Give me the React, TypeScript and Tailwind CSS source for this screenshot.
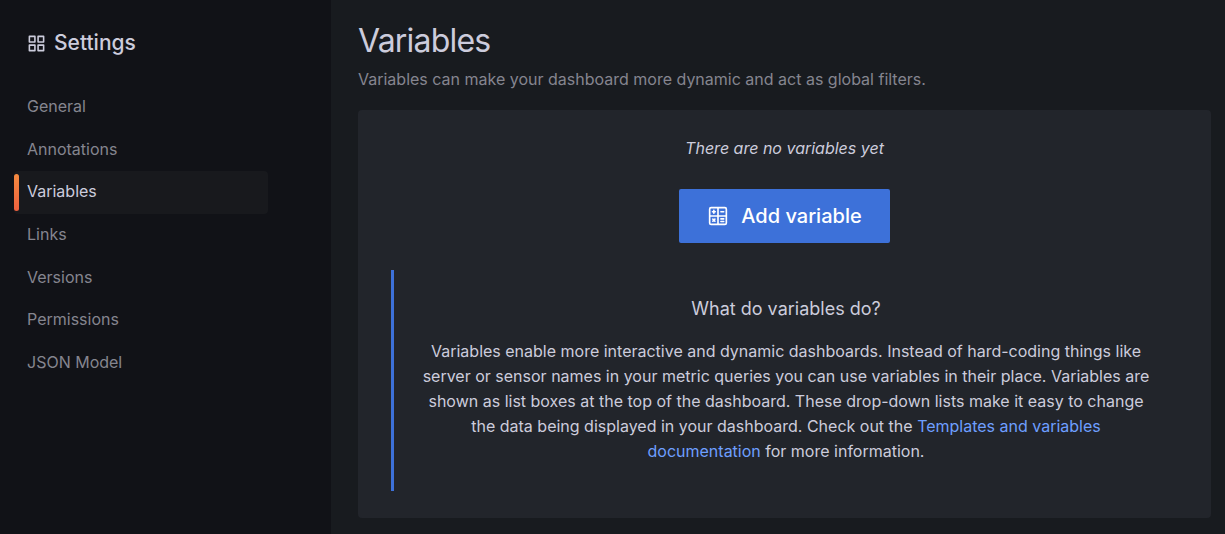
const sections = ['General', 'Annotations', 'Variables', 'Links', 'Versions', 'Permissions', 'JSON Model'];
const activeSection = 'Variables';

function AppsIcon() {
  return (
    <svg viewBox="0 0 24 24" className="size-[19px] shrink-0" fill="currentColor" aria-hidden="true">
      <path d="M10,13H3a1,1,0,0,0-1,1v7a1,1,0,0,0,1,1h7a1,1,0,0,0,1-1V14A1,1,0,0,0,10,13ZM9,20H4V15H9ZM21,2H14a1,1,0,0,0-1,1v7a1,1,0,0,0,1,1h7a1,1,0,0,0,1-1V3A1,1,0,0,0,21,2ZM20,9H15V4h5Zm1,4H14a1,1,0,0,0-1,1v7a1,1,0,0,0,1,1h7a1,1,0,0,0,1-1V14A1,1,0,0,0,21,13Zm-1,7H15V15h5ZM10,2H3A1,1,0,0,0,2,3v7a1,1,0,0,0,1,1h7a1,1,0,0,0,1-1V3A1,1,0,0,0,10,2ZM9,9H4V4H9Z" />
    </svg>
  );
}

function CalculatorIcon() {
  return (
    <svg viewBox="0 0 24 24" className="size-[22px] shrink-0" fill="none" stroke="currentColor" strokeWidth="1.8" strokeLinecap="round" aria-hidden="true">
      <rect x="2.9" y="2.9" width="18.2" height="18.2" rx="1.6" />
      <path d="M12 3v18M3 12h18" />
      <path d="M6 7.4h3M7.5 5.9v3M15.2 7.4h3M6.4 15.5l2.2 2.2M8.6 15.5l-2.2 2.2M15.2 15.2h3M15.2 18h3" />
    </svg>
  );
}

export default function App() {
  return (
    <div className="flex min-h-screen bg-[#181b1f] font-[Inter,sans-serif] text-base text-[#ccccdc]">
      <aside className="w-[331px] shrink-0 bg-[#111217] pt-7 pl-[14px]">
        <h2 className="flex items-center gap-2 pl-[13px] text-[21px] leading-[30px] font-medium">
          <AppsIcon />
          Settings
        </h2>
        <nav className="mt-7 mr-[63px] grid min-h-[298px] auto-rows-fr" aria-label="Settings">
          {sections.map((name) => {
            const active = name === activeSection;
            return (
              <a
                key={name}
                href="#"
                aria-current={active ? 'page' : undefined}
                className={
                  active
                    ? 'relative flex items-center rounded bg-[#18191d] pb-[2px] pl-[13px] text-[#ccccdc]'
                    : 'relative flex items-center rounded pb-[2px] pl-[13px] text-[#85858f]'
                }
              >
                {active && (
                  <span className="absolute inset-y-[3px] left-0 w-[5px] rounded-sm bg-linear-to-b from-[#f58a40] to-[#ed5f3e]" />
                )}
                {name}
              </a>
            );
          })}
        </nav>
      </aside>

      <main className="min-w-0 flex-1 pt-5 pr-[14px] pb-4 pl-[27px]">
        <h1 className="text-[32px] leading-[42px] font-normal tracking-tight">Variables</h1>
        <p className="mt-1 leading-[26px] text-[#85858f]">
          Variables can make your dashboard more dynamic and act as global filters.
        </p>

        <section className="mt-[18px] flex flex-col items-center rounded-sm bg-[#22252b] px-[33px] pt-[26px] pb-[27px] text-center">
          <p className="leading-[25px] italic">There are no variables yet</p>
          <button
            type="button"
            className="mt-7 flex h-[54px] items-center gap-3 rounded-xs bg-[#3d71d9] px-7 text-xl font-medium text-white"
          >
            <CalculatorIcon />
            Add variable
          </button>
          <div className="mt-[27px] w-full border-l-3 border-[#3d71d9] px-[27px] py-[27px]">
            <h3 className="text-lg leading-6">What do variables do?</h3>
            <p className="mt-[18px] leading-[25px]">
              Variables enable more interactive and dynamic dashboards. Instead of hard-coding things like server or
              sensor names in your metric queries you can use variables in their place. Variables are shown as list
              boxes at the top of the dashboard. These drop-down lists make it easy to change the data being displayed
              in your dashboard. Check out the{' '}
              <a href="#" className="text-[#6e9fff]">
                Templates and variables documentation
              </a>{' '}
              for more information.
            </p>
          </div>
        </section>
      </main>
    </div>
  );
}
